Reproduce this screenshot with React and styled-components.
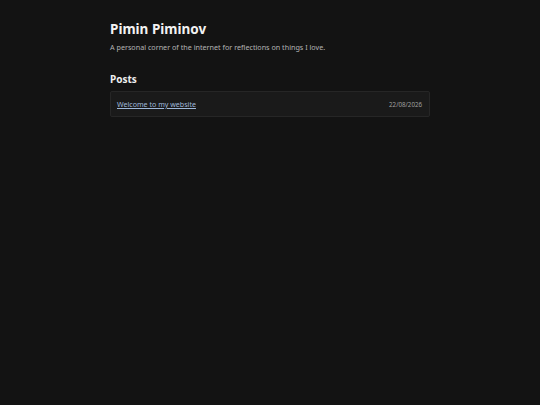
import React from 'react';
import styled, { createGlobalStyle } from 'styled-components';

const GlobalStyle = createGlobalStyle`
  html, body {
    margin: 0;
    background: #131313;
    font-family: "Noto Sans", "Open Sans", sans-serif;
    color: #e6e6e6;
  }
`

const Page = styled.div`
  min-height: 100vh;
  background: #131313;
  display: flex;
  justify-content: center;
`

const Container = styled.main`
  width: 320px;
  padding-top: 19px;
`

const Title = styled.h1`
  margin: 0;
  font-size: 13.5px;
  font-weight: 700;
  color: #f2f2f2;
  line-height: 20px;
`

const Subtitle = styled.p`
  margin: 3px 0 0;
  font-size: 7.2px;
  color: #b4b4b4;
  line-height: 11px;
`

const SectionTitle = styled.h2`
  margin: 19px 0 0;
  font-size: 10px;
  font-weight: 700;
  color: #eeeeee;
  line-height: 14px;
`

const PostList = styled.ul`
  list-style: none;
  margin: 5px 0 0;
  padding: 0;
`

const PostRow = styled.li`
  display: flex;
  align-items: center;
  justify-content: space-between;
  height: 24px;
  padding: 0 7px 0 6px;
  background: #1a1a1a;
  border: 1px solid #262626;
  border-radius: 2px;
`

const PostLink = styled.a`
  font-size: 7.1px;
  color: #9fb8da;
  text-decoration: underline;
`

const PostDate = styled.span`
  font-size: 6.2px;
  color: #a0a0a0;
`

const posts = [
  { title: 'Welcome to my website', date: '22/08/2026' }
]

class App extends React.Component {
  render() {
    return (
      <Page>
        <GlobalStyle />
        <Container>
          <Title>Pimin Piminov</Title>
          <Subtitle>A personal corner of the internet for reflections on things I love.</Subtitle>
          <SectionTitle>Posts</SectionTitle>
          <PostList>
            {posts.map((post, index) => (
              <PostRow key={index}>
                <PostLink href="#">{post.title}</PostLink>
                <PostDate>{post.date}</PostDate>
              </PostRow>
            ))}
          </PostList>
        </Container>
      </Page>
    );
  }
}

export default App;
